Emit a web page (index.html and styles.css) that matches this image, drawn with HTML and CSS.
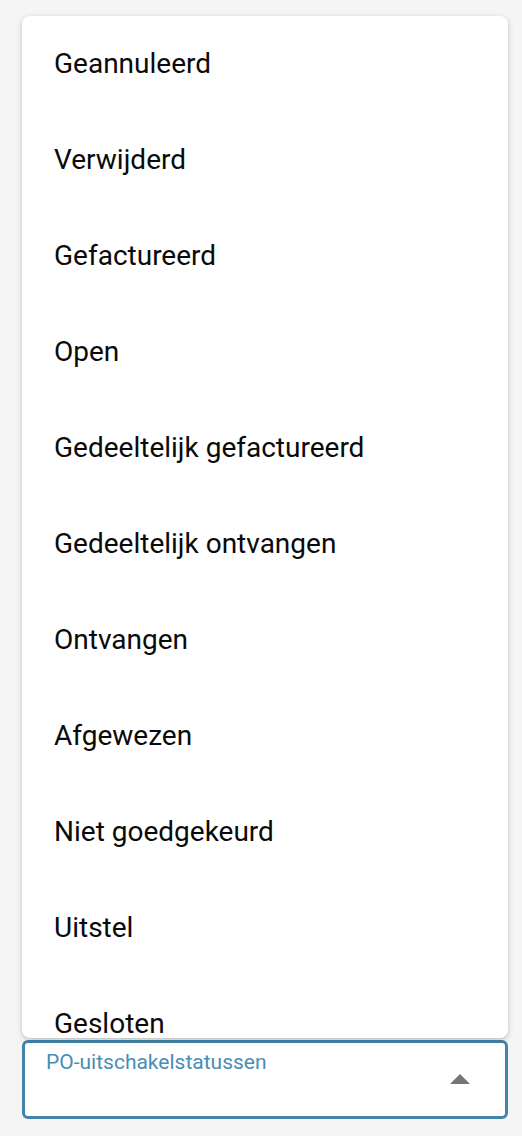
FILE: index.html
```html
<!DOCTYPE html>
<html lang="nl">
<head>
<meta charset="utf-8">
<link rel="stylesheet" href="styles.css">
</head>
<body>
<div class="page">
  <div class="menu">
    <ul class="list">
      <li class="item">Geannuleerd</li>
      <li class="item">Verwijderd</li>
      <li class="item">Gefactureerd</li>
      <li class="item">Open</li>
      <li class="item">Gedeeltelijk gefactureerd</li>
      <li class="item">Gedeeltelijk ontvangen</li>
      <li class="item">Ontvangen</li>
      <li class="item">Afgewezen</li>
      <li class="item">Niet goedgekeurd</li>
      <li class="item">Uitstel</li>
      <li class="item">Gesloten</li>
    </ul>
  </div>
  <div class="field">
    <span class="label">PO-uitschakelstatussen</span>
    <svg class="caret" width="20" height="10" viewBox="0 0 20 10"><path d="M0 10 L10 0 L20 10 Z" fill="#757575"/></svg>
  </div>
</div>
</body>
</html>
```

FILE: styles.css
```css
html, body {
  margin: 0;
  padding: 0;
  background: #f5f5f5;
  font-family: Roboto, "Liberation Sans", sans-serif;
}
.page {
  padding: 16px 14px 0 22px;
  display: flex;
  flex-direction: column;
}
.menu {
  position: relative;
  z-index: 2;
  height: 1022px;
  overflow: hidden;
  background: #ffffff;
  border-radius: 8px;
  box-shadow: 0 2px 6px rgba(0,0,0,0.18), 0 1px 2px rgba(0,0,0,0.08);
}
.list {
  list-style: none;
  margin: 0;
  padding: 0;
}
.item {
  box-sizing: border-box;
  height: 96px;
  display: flex;
  align-items: center;
  padding: 0 0 2px 32px;
  font-size: 28px;
  color: #0a0a0a;
}
.field {
  margin-top: 2px;
  height: 73px;
  border: 3px solid #4285aa;
  border-radius: 6px;
  background: #ffffff;
  display: flex;
  justify-content: space-between;
  align-items: flex-start;
  padding: 0 35px 0 21px;
}
.label {
  margin-top: 7px;
  font-size: 21px;
  line-height: 24px;
  color: #4a8db5;
}
.caret {
  margin-top: 31px;
}
```
